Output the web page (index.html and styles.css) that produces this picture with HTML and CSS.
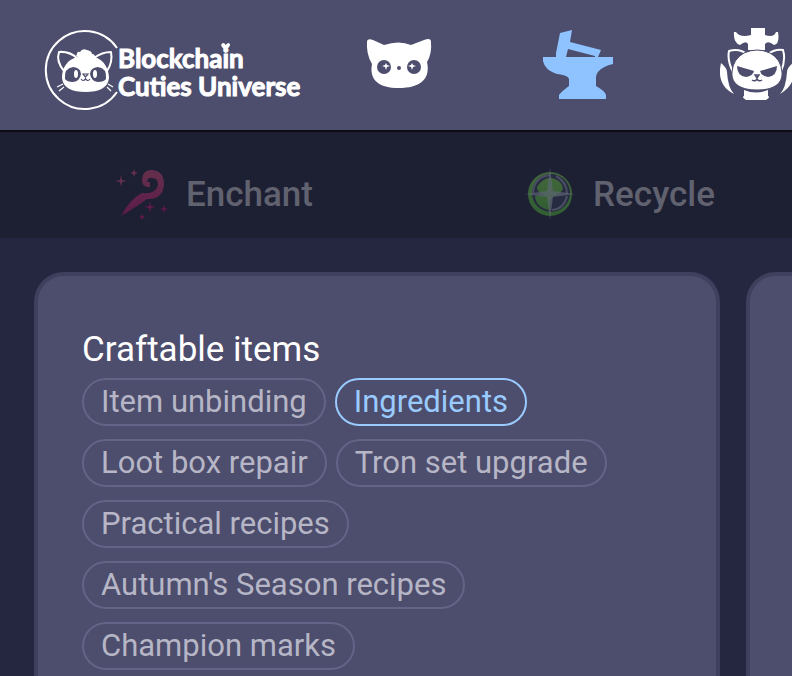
FILE: index.html
```html
<!DOCTYPE html>
<html lang="en">
<head>
<meta charset="utf-8">
<meta name="viewport" content="width=device-width, initial-scale=1">
<title>Blockchain Cuties Universe</title>
<link rel="stylesheet" href="styles.css">
</head>
<body>
<header class="header">
    <a class="logo" href="#">
        <svg class="logo-cat" viewBox="0 0 72 80" aria-hidden="true">
            <path d="M71 18A39 39 0 1 0 71 62" fill="none" stroke="#fff" stroke-width="2"/>
            <path d="M18 41C13 35 11 28 13 22Q23 21 31 28M48 28Q56 22 65 22Q67 32 61 41" fill="none" stroke="#fff" stroke-width="2" stroke-linejoin="round"/>
            <path d="M16 48C16 37 22 29 32 27Q29 26 31 24Q31 21 34 22Q36 18 41 20Q46 21 46 24Q49 24 49 27C58 30 63 39 63 48C62 58 53 62 39.500 62C26 62 17 58 16 48Z" fill="#fff"/>
            <path d="M19 49Q18 38 27 37Q35 38 35 44Q34 51 27 52Q21 52 19 49ZM60 49Q61 38 52 37Q44 38 44 44Q45 51 52 52Q58 52 60 49Z" fill="#4d4d6d"/>
            <ellipse cx="30" cy="44" rx="2" ry="4" fill="#fff"/>
            <ellipse cx="49" cy="44" rx="2" ry="4" fill="#fff"/>
            <path d="M37 44H42L39.500 47ZM39.500 46V49M35 49Q37 52 39.500 49Q42 52 44 49" fill="none" stroke="#4d4d6d" stroke-width="1.200"/>
            <path d="M17 54L11 57M18 57L13 61M62 54L67 57M61 57L65 61" stroke="#fff" stroke-width="1.200"/>
        </svg>
        <span class="logo-text">Blockchain<br>Cuties Universe<svg class="logo-heart" viewBox="0 0 9 8" aria-hidden="true"><path d="M4.500 8L1 4Q-1 1 2 0Q4 0 4.500 2Q6 0 8 0Q10 2 8 4Z" fill="#fff"/></svg></span>
    </a>
    <nav class="menu">
        <a href="#" aria-label="Pets">
            <svg viewBox="0 0 72 80">
                <path d="M4 11Q5 8 10 10L21 15Q36 10 48 15L61 10Q68 7 68 12Q69 24 64 32C68 50 56 58 36 58C16 58 6 50 9 34Q3 24 4 11Z" fill="#fff"/>
                <ellipse cx="21" cy="37" rx="7" ry="7" fill="#4d4d6d"/>
                <ellipse cx="51" cy="37" rx="7" ry="7" fill="#4d4d6d"/>
                <circle cx="36" cy="38" r="2" fill="#4d4d6d"/>
                <path d="M23 33L24 35L27 36L24 37L23 40L22 37L19 36L22 35ZM49 33L50 35L53 36L50 37L49 40L48 37L45 36L48 35Z" fill="#fff"/>
            </svg>
        </a>
        <a href="#" aria-label="Workshop">
            <svg viewBox="0 0 72 80">
                <path d="M1 27H14L14 23L16 13L18 3L30 0L28 12L59 20L56 27H71V34Q55 38 54 47V56Q63 61 64 65V69H17V65Q20 61 27 56V49Q26 46 21 45Q4 43 1 31Z" fill="#8ec3ff"/>
                <path d="M26 19L53 26V27H24Z" fill="#4d4d6d"/>
            </svg>
        </a>
        <a href="#" aria-label="Arena">
            <svg viewBox="0 0 72 80">
                <path d="M31-2H45V5Q54 8 56 2H58Q60 14 54 15Q48 10 45 14V20H28V14Q26 10 20 15Q13 13 14 2H16Q20 8 31 5ZM24 60Q36 65 48 60V66Q51 67 46 70H26Q21 67 24 66ZM1 33Q7 38 7 42Q8 58 14 64Q-4 55 1 33ZM73 33Q67 38 67 42Q66 58 60 64Q78 54 73 33Z" fill="#fff"/>
                <path d="M13 42Q7 30 9 21Q20 18 28 25M47 25Q54 19 63 20Q66 30 61 41" fill="#4d4d6d" stroke="#fff" stroke-width="2"/>
                <path d="M12 42Q13 29 24 23Q37 17 50 23Q61 29 62 42C63 55 52 60 37 60C22 60 11 55 12 42Z" fill="#fff" stroke="#4d4d6d" stroke-width="1"/>
                <path d="M17 36L34 41Q33 46 26 47Q17 46 17 36ZM57 36L40 41Q41 46 48 47Q57 46 57 36Z" fill="#4d4d6d"/>
                <path d="M35 45H39L37 48ZM32 50Q35 52 37 49Q39 52 42 50" fill="none" stroke="#4d4d6d" stroke-width="1.500"/>
            </svg>
        </a>
    </nav>
</header>

<nav class="tabs">
    <a href="#">
        <svg viewBox="0 0 54 54" aria-hidden="true">
            <defs>
                <linearGradient id="wand" x1="0" y1="0" x2="0" y2="1">
                    <stop offset="0" stop-color="#64304c"/>
                    <stop offset="1" stop-color="#5d1a4a"/>
                </linearGradient>
            </defs>
            <path d="M7 49Q16 32 28 26Q41 28 44 18Q44 11 38 11Q34 10 33 15H36V20Q29 21 28 14Q28 3 38 3Q50 4 50 17Q49 33 33 32Q19 42 7 49Z" fill="url(#wand)"/>
            <path d="M7 8L8 13L13 14L8 15L7 20L6 15L1 14L6 13ZM20 2L21 5L24 6L21 7L20 10L19 7L16 6L19 5Z" fill="#64304c"/>
            <path d="M36 34L37 39L42 40L37 41L36 46L35 41L30 40L35 39ZM50 38L51 41L54 42L51 43L50 46L49 43L46 42L49 41ZM28 47L29 49L31 50L29 51L28 53L27 51L25 50L27 49Z" fill="#5d1a4a"/>
        </svg>
        <span>Enchant</span>
    </a>
    <a href="#">
        <svg viewBox="0 0 50 54" aria-hidden="true">
            <defs>
                <linearGradient id="leaf" x1="0" y1="0" x2="0" y2="1">
                    <stop offset="0" stop-color="#41663b"/>
                    <stop offset="1" stop-color="#315f31"/>
                </linearGradient>
            </defs>
            <circle cx="25" cy="27" r="22" fill="url(#leaf)"/>
            <circle cx="26" cy="26" r="19" fill="#272b42"/>
            <path d="M12 20Q18 10 27 11Q38 14 38 22Q36 27 28 29Q24 34 25 43Q11 41 10 29Q14 28 20 28Q12 26 12 20Z" fill="url(#leaf)"/>
            <path d="M42 27Q42 15 31 9M25 8Q9 10 8 26M27 43Q39 42 42 29" fill="none" stroke="#4a4e62" stroke-width="2"/>
            <path d="M25 1L28 24L50 27L28 30L25 53L22 30L0 27L22 24Z" fill="#5c6570" opacity=".7"/>
        </svg>
        <span>Recycle</span>
    </a>
</nav>

<main class="panels">
    <section class="panel">
        <h2>Craftable items</h2>
        <div class="filters">
            <button type="button">Item unbinding</button>
            <button type="button" class="active">Ingredients</button>
            <button type="button">Loot box repair</button>
            <button type="button">Tron set upgrade</button>
            <button type="button">Practical recipes</button>
            <button type="button">Autumn's Season recipes</button>
            <button type="button">Champion marks</button>
        </div>
    </section>
    <section class="panel"></section>
</main>
</body>
</html>
```
FILE: styles.css
```css
* {
    box-sizing: border-box;
}

body {
    margin: 0;
    height: 100vh;
    display: flex;
    flex-direction: column;
    overflow: hidden;
    background: #252741;
    color: #fff;
    font-family: Roboto, sans-serif;
}

a {
    color: inherit;
    text-decoration: none;
}

svg {
    display: block;
    overflow: visible;
}

/* header */
.header {
    display: flex;
    flex-shrink: 0;
    align-items: center;
    height: 132px;
    padding: 10px 0 0 46px;
    background: #4d4d6d;
    border-bottom: 2px solid #0c0c12;
}

.logo {
    display: flex;
    align-items: center;
    flex-shrink: 0;
    width: 252px;
}

.logo-cat {
    width: 72px;
    height: 80px;
    flex-shrink: 0;
}

.logo-text {
    position: relative;
    padding-top: 4px;
    font: bold 26px/28px Lato, sans-serif;
    -webkit-text-stroke: 1px #fff;
    white-space: nowrap;
}

.logo-heart {
    position: absolute;
    top: 3px;
    left: 103px;
    width: 9px;
    height: 8px;
}

.menu {
    display: flex;
    flex: 1;
    justify-content: space-between;
    margin-left: 65px;
}

.menu svg {
    width: 72px;
    height: 80px;
}

/* tabs */
.tabs {
    display: flex;
    flex-shrink: 0;
    justify-content: space-between;
    align-items: center;
    height: 106px;
    padding: 18px 77px 0 114px;
    background: #1d1f33;
    color: #61626f;
    font-size: 35px;
    font-weight: 500;
}

.tabs a {
    display: flex;
    align-items: center;
    gap: 18px;
}

.tabs svg {
    height: 54px;
}

/* panels */
.panels {
    display: grid;
    grid-template-columns: calc(100% - 38px) 100%;
    gap: 26px;
    flex: 1;
    padding: 34px 34px 0;
}

.panel {
    padding: 50px 44px;
    background: #4d4d6d;
    border: 4px solid #40405e;
    border-radius: 30px;
}

.panel h2 {
    margin: 0 0 4px;
    font-size: 35px;
    line-height: 48px;
    font-weight: 400;
}

.filters {
    display: flex;
    flex-wrap: wrap;
    gap: 13px 9px;
}

.filters button {
    height: 48px;
    padding: 0 17px;
    background: none;
    border: 2px solid #646388;
    border-radius: 24px;
    color: #b6b6c6;
    font-family: inherit;
    font-size: 31px;
    line-height: 44px;
}

.filters .active {
    border-color: #9acbff;
    color: #9acbff;
}
```
